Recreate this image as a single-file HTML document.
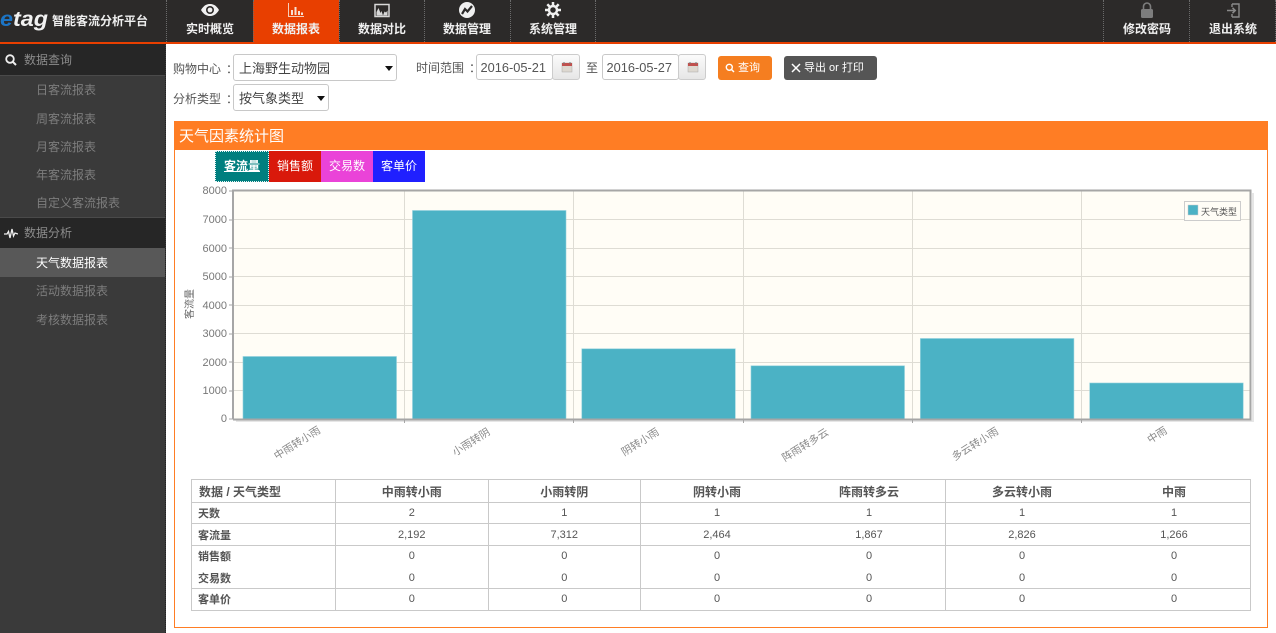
<!DOCTYPE html>
<html lang="zh"><head><meta charset="utf-8"><title>天气因素统计图</title>
<style>
*{box-sizing:border-box}
html,body{margin:0;padding:0;width:1276px;height:633px;overflow:hidden;background:#fff}
body{position:relative;font-family:"Liberation Sans","Noto Sans CJK SC",sans-serif;font-size:12px;color:#555}
.a{position:absolute;white-space:nowrap}
.c{position:relative;left:5px}
#hd{left:0;top:0;width:1276px;height:44px;background:#2c2a29;border-bottom:2px solid #e83f00}
.sep{position:absolute;top:0;width:0;height:42px;border-left:1px dotted #6b6b6b}
.nv{position:absolute;top:0;height:42px;width:86px;text-align:center;color:#f0f0f0;font-weight:bold;font-size:12px}
.nv span{position:absolute;left:0;right:0;top:21px;line-height:16px}
.nv svg{position:absolute;left:33px;top:1px}
#sb{left:0;top:44px;width:166px;height:589px;background:#3a3a3a;border-right:1px dotted #222}
.g{position:absolute;left:0;width:165px;height:32px;background:#262626;border-bottom:1px solid #4a4a4a;color:#8c8c8c;line-height:31px;padding-left:24px}
.g svg{position:absolute;left:4px;top:9px}
.i{position:absolute;left:0;width:165px;height:29px;line-height:31px;padding-left:36px;color:#7d7d7d}
.i.on{background:#585858;color:#fff}
.box{background:#fff;border:1px solid #c8c8c8;border-radius:3px;color:#444}
.cal{background:linear-gradient(#fbfbfb,#e6e6e6);border:1px solid #ccc;border-radius:3px}
.cal svg{position:absolute;left:8px;top:6px}
.arr{position:absolute;width:0;height:0;border-left:4px solid transparent;border-right:4px solid transparent;border-top:5px solid #111}
.tab{position:absolute;top:151px;height:31px;line-height:31px;text-align:center;color:#fff;font-size:12px}
table{position:absolute;left:191px;top:479px;width:1060px;height:131px;border-collapse:collapse;table-layout:fixed;font-size:11px;color:#555}
td{border:1px solid #c9c9c9;padding:0;text-align:center;height:21px}
td:first-child{text-align:left;padding-left:6px;font-weight:bold}
tr.h td{font-weight:bold;font-size:12px}
.nr{border-right:none}.nl{border-left:none}
tr.nb td{border-bottom:none;padding-bottom:1px}tr.nt td{border-top:none;padding-top:1px}
tr.l td{padding-bottom:2px}
</style></head><body>

<div id="hd" class="a"></div>
<div class="a" style="left:0;top:9px;font:italic bold 21px/22px 'Liberation Sans',sans-serif;color:#f2f2f2;transform:scaleX(1.11);transform-origin:0 0"><span style="color:#1c74c4">e</span>tag</div>
<div class="a" style="left:52px;top:13px;line-height:16px;color:#eee;font-weight:bold">智能客流分析平台</div>

<div class="a" style="left:253px;top:0;width:86px;height:42px;background:#e83f00"></div>
<div class="sep" style="left:166px"></div><div class="sep" style="left:253px"></div><div class="sep" style="left:339px"></div><div class="sep" style="left:424px"></div><div class="sep" style="left:510px"></div><div class="sep" style="left:595px"></div><div class="sep" style="left:1103px"></div><div class="sep" style="left:1189px"></div><div class="sep" style="left:1275px"></div>

<div class="nv" style="left:167px"><svg width="20" height="18" viewBox="0 0 20 18"><path d="M1 9C4 4 7 3 10 3s6 1 9 6c-3 5-6 6-9 6S4 14 1 9z" fill="#f0f0f0"/><circle cx="10" cy="9" r="4" fill="#2c2a29"/><circle cx="10" cy="9" r="2.4" fill="#f0f0f0"/></svg><span>实时概览</span></div>
<div class="nv" style="left:253px"><svg width="20" height="18" viewBox="0 0 20 18"><path d="M2.500 2v13.500H18" fill="none" stroke="#f6cdb8" stroke-width="1"/><path d="M5 9h2v5H5zM8.500 6h2v8h-2zM12 10h2v4h-2zM15 11.500h2V14h-2z" fill="#f6e0d4"/></svg><span>数据报表</span></div>
<div class="nv" style="left:339px"><svg width="20" height="18" viewBox="0 0 20 18"><path d="M3 3.500h14v12H3z" fill="#2c2a29" stroke="#d8d8d8" stroke-width="1.500"/><path d="M4.500 14.500V11l2-4 2 5 1-2 1.500 4.500 1.500-4 1.500 1 1.500-2v5z" fill="#d8d8d8"/></svg><span>数据对比</span></div>
<div class="nv" style="left:424px"><svg width="20" height="18" viewBox="0 0 20 18"><circle cx="10" cy="9" r="8" fill="#f0f0f0"/><path d="M5 13l3-5 2.500 2.500L15 5" fill="none" stroke="#2c2a29" stroke-width="2.200"/></svg><span>数据管理</span></div>
<div class="nv" style="left:510px"><svg width="20" height="18" viewBox="0 0 20 18"><circle cx="10" cy="9" r="4" fill="none" stroke="#f0f0f0" stroke-width="2.500"/><path d="M10 1v3M10 14v3M2 9h3M15 9h3M4.300 3.300l2.200 2.200M13.500 12.500l2.200 2.200M15.700 3.300l-2.200 2.200M6.500 12.500l-2.200 2.200" stroke="#f0f0f0" stroke-width="2.500"/></svg><span>系统管理</span></div>
<div class="nv" style="left:1104px"><svg width="20" height="18" viewBox="0 0 20 18"><path d="M6.500 8V5.500a3.500 3.500 0 0 1 7 0V8" fill="none" stroke="#7d7d7d" stroke-width="1.600"/><rect x="4" y="8" width="12" height="9" rx="1.500" fill="#7d7d7d"/></svg><span>修改密码</span></div>
<div class="nv" style="left:1190px"><svg width="20" height="18" viewBox="0 0 20 18"><path d="M9 3h7v13H9M9 3v3M9 13v3" fill="none" stroke="#8a8a8a" stroke-width="1.400"/><path d="M4 9.500h8M9.500 6.800l2.800 2.700-2.800 2.700" fill="none" stroke="#8a8a8a" stroke-width="1.500"/></svg><span>退出系统</span></div>

<div id="sb" class="a">
<div class="g" style="top:0;line-height:33px"><svg width="14" height="14" viewBox="0 0 14 14"><circle cx="6" cy="6" r="3.800" fill="none" stroke="#eee" stroke-width="1.800"/><path d="M8.800 8.800l3.200 3.200" stroke="#eee" stroke-width="2"/></svg>数据查询</div>
<div class="i" style="top:31px">日客流报表</div>
<div class="i" style="top:60px">周客流报表</div>
<div class="i" style="top:88px">月客流报表</div>
<div class="i" style="top:116px">年客流报表</div>
<div class="i" style="top:144px">自定义客流报表</div>
<div class="g" style="top:173px;border-top:1px solid #4a4a4a;line-height:30px"><svg width="14" height="14" viewBox="0 0 14 14"><path d="M0 7h3l1.500-2.500L6 11l2-9 1.500 7L11 6l3 1" fill="none" stroke="#eee" stroke-width="1.300"/></svg>数据分析</div>
<div class="i on" style="top:204px">天气数据报表</div>
<div class="i" style="top:232px">活动数据报表</div>
<div class="i" style="top:261px">考核数据报表</div>
</div>

<div class="a" style="left:173px;top:61px;line-height:16px">购物中心<span class="c">：</span></div>
<div class="a box" style="left:233px;top:54px;width:164px;height:27px;font-size:13px;line-height:27px;padding-left:5px">上海野生动物园</div>
<div class="arr" style="left:385px;top:66px"></div>
<div class="a" style="left:173px;top:91px;line-height:16px">分析类型<span class="c">：</span></div>
<div class="a box" style="left:233px;top:84px;width:96px;height:27px;font-size:13px;line-height:27px;padding-left:5px">按气象类型</div>
<div class="arr" style="left:317px;top:96px"></div>

<div class="a" style="left:416px;top:60px;line-height:16px">时间范围<span class="c">：</span></div>
<div class="a box" style="left:476px;top:54px;width:77px;height:26px;font-size:12.800px;line-height:26px;padding-left:3.500px;color:#555">2016-05-21</div>
<div class="a cal" style="left:552px;top:54px;width:28px;height:26px"><svg width="12" height="12" viewBox="0 0 12 12"><rect x="1" y="2" width="10" height="9" fill="#ddd8d0" stroke="#aaa" stroke-width=".5"/><rect x="1" y="2" width="10" height="3" fill="#c0504d"/><path d="M3 1v2M9 1v2" stroke="#777"/></svg></div>
<div class="a" style="left:586px;top:60px;line-height:16px">至</div>
<div class="a box" style="left:602px;top:54px;width:77px;height:26px;font-size:12.800px;line-height:26px;padding-left:3.500px;color:#555">2016-05-27</div>
<div class="a cal" style="left:678px;top:54px;width:28px;height:26px"><svg width="12" height="12" viewBox="0 0 12 12"><rect x="1" y="2" width="10" height="9" fill="#ddd8d0" stroke="#aaa" stroke-width=".5"/><rect x="1" y="2" width="10" height="3" fill="#c0504d"/><path d="M3 1v2M9 1v2" stroke="#777"/></svg></div>
<div class="a" style="left:718px;top:56px;width:54px;height:24px;background:#f57e20;border-radius:3px;color:#fff;font-size:11px;line-height:25px;padding-left:20px">查询<svg style="position:absolute;left:7px;top:7px" width="10" height="10" viewBox="0 0 10 10"><circle cx="4.300" cy="4.300" r="3" fill="none" stroke="#fff" stroke-width="1.400"/><path d="M6.500 6.500L9 9" stroke="#fff" stroke-width="1.500"/></svg></div>
<div class="a" style="left:784px;top:56px;width:93px;height:24px;background:#555;border-radius:3px;color:#fff;font-size:11px;line-height:25px;padding-left:20px">导出 or 打印<svg style="position:absolute;left:7px;top:7px" width="10" height="10" viewBox="0 0 10 10"><path d="M1 1l8 8M9 1L1 9" stroke="#fff" stroke-width="1.500"/></svg></div>

<div class="a" style="left:174px;top:121px;width:1094px;height:507px;border:1px solid #ff7d24;border-top:none"></div>
<div class="a" style="left:174px;top:121px;width:1094px;height:29px;background:#ff7d24;color:#fff;font-size:15px;line-height:32px;padding-left:5px">天气因素统计图</div>

<div class="tab" style="left:215px;width:54px;background:#007f7f;font-weight:bold;text-decoration:underline;outline:1px dotted #e8f4f4;outline-offset:-1px">客流量</div>
<div class="tab" style="left:269px;width:52px;background:#d9190b">销售额</div>
<div class="tab" style="left:321px;width:52px;background:#ea43d8">交易数</div>
<div class="tab" style="left:373px;width:52px;background:#2020ff">客单价</div>

<svg class="a" style="left:0;top:0" width="1276" height="633" font-family="Liberation Sans,Noto Sans CJK SC,sans-serif">
<rect x="234" y="191" width="1017" height="228" fill="#fffdf6"/>
<g stroke="#dedcd4" stroke-width="1">
<path d="M234 219.500H1251M234 248.500H1251M234 276.500H1251M234 305.500H1251M234 333.500H1251M234 362.500H1251M234 390.500H1251"/>
<path d="M404.500 191V419M573.500 191V419M743.500 191V419M912.500 191V419M1081.500 191V419"/>
</g>
<g fill="#4bb2c5" stroke="#8fd0dc" stroke-width=".6">
<rect x="243" y="356.500" width="153.500" height="62.500"/>
<rect x="412.500" y="210.500" width="153.500" height="208.500"/>
<rect x="581.800" y="348.800" width="153.500" height="70.200"/>
<rect x="751" y="365.800" width="153.500" height="53.200"/>
<rect x="920.400" y="338.500" width="153.500" height="80.500"/>
<rect x="1089.700" y="383" width="153.500" height="36"/>
</g>
<path d="M236 421H1253V193" fill="none" stroke="#e6e6e6" stroke-width="2"/>
<path d="M233 419.500V190.500H1250.500V419.500H233" fill="none" stroke="#a6a6a6" stroke-width="2"/>
<path d="M229 191h4M229 220h4M229 248h4M229 277h4M229 305h4M229 334h4M229 362h4M229 391h4M229 419h4M404.500 420v3M573.500 420v3M743.500 420v3M912.500 420v3M1081.500 420v3" stroke="#a6a6a6"/>
<g fill="#777" font-size="11" text-anchor="end">
<text x="227" y="194">8000</text><text x="227" y="223">7000</text><text x="227" y="252">6000</text><text x="227" y="280">5000</text><text x="227" y="309">4000</text><text x="227" y="337">3000</text><text x="227" y="366">2000</text><text x="227" y="394">1000</text><text x="227" y="422">0</text>
</g>
<text transform="translate(193 304) rotate(-90)" text-anchor="middle" font-size="10" fill="#666">客流量</text>
<g fill="#888" font-size="10.500" text-anchor="middle">
<text transform="translate(299 446) rotate(-32)">中雨转小雨</text>
<text transform="translate(473 445) rotate(-32)">小雨转阴</text>
<text transform="translate(642 445) rotate(-32)">阴转小雨</text>
<text transform="translate(807 448) rotate(-32)">阵雨转多云</text>
<text transform="translate(977 447) rotate(-32)">多云转小雨</text>
<text transform="translate(1159 438) rotate(-32)">中雨</text>
</g>
<rect x="1184.500" y="201.500" width="56" height="19" fill="#fffdf6" stroke="#ccc"/>
<rect x="1188" y="205" width="10" height="10" fill="#4bb2c5" stroke="#ccc" stroke-width=".5"/>
<text x="1201" y="215" font-size="9" fill="#555">天气类型</text>
</svg>

<table>
<colgroup><col style="width:144px"><col><col><col><col><col><col></colgroup>
<tr class="h" style="height:23px"><td style="padding-left:7px">数据 / 天气类型</td><td>中雨转小雨</td><td>小雨转阴</td><td class="nr">阴转小雨</td><td class="nl">阵雨转多云</td><td class="nr">多云转小雨</td><td class="nl">中雨</td></tr>
<tr style="height:21px"><td>天数</td><td>2</td><td>1</td><td class="nr">1</td><td class="nl">1</td><td class="nr">1</td><td class="nl">1</td></tr>
<tr style="height:22px"><td>客流量</td><td>2,192</td><td>7,312</td><td class="nr">2,464</td><td class="nl">1,867</td><td class="nr">2,826</td><td class="nl">1,266</td></tr>
<tr class="nb" style="height:22px"><td>销售额</td><td>0</td><td>0</td><td class="nr">0</td><td class="nl">0</td><td class="nr">0</td><td class="nl">0</td></tr>
<tr class="nt" style="height:21px"><td>交易数</td><td>0</td><td>0</td><td class="nr">0</td><td class="nl">0</td><td class="nr">0</td><td class="nl">0</td></tr>
<tr class="l" style="height:22px"><td>客单价</td><td>0</td><td>0</td><td class="nr">0</td><td class="nl">0</td><td class="nr">0</td><td class="nl">0</td></tr>
</table>
</body></html>
